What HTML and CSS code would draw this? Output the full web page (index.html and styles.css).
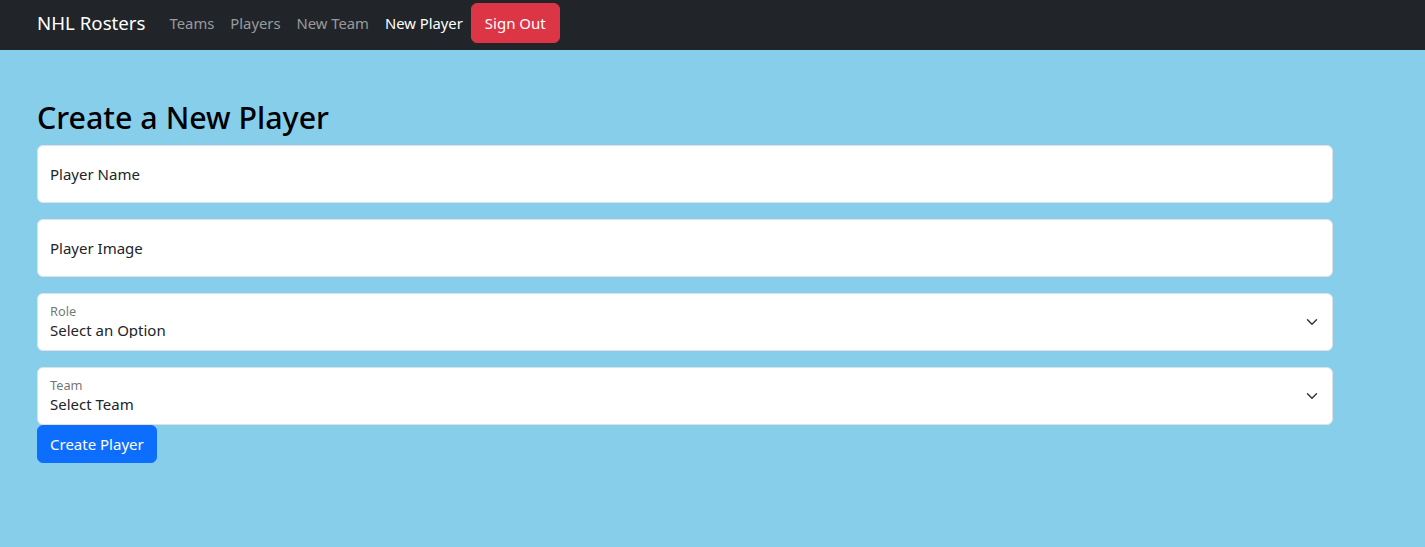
FILE: index.html
```html
<!DOCTYPE html>
<html lang="en">
<head>
<meta charset="utf-8">
<title>NHL Rosters</title>
<link rel="stylesheet" href="styles.css">
</head>
<body>
<nav class="navbar">
  <div class="nav-inner">
    <a class="brand" href="#">NHL Rosters</a>
    <ul class="nav-list">
      <li><a class="nav-link" href="#">Teams</a></li>
      <li><a class="nav-link" href="#">Players</a></li>
      <li><a class="nav-link" href="#">New Team</a></li>
      <li><a class="nav-link active" href="#">New Player</a></li>
      <li><button class="btn btn-danger" type="button">Sign Out</button></li>
    </ul>
  </div>
</nav>
<main class="container">
  <h2 class="title">Create a New Player</h2>
  <form class="player-form">
    <div class="floating">
      <input class="control" type="text" id="pname" placeholder=" ">
      <label class="float-label" for="pname">Player Name</label>
    </div>
    <div class="floating">
      <input class="control" type="text" id="pimage" placeholder=" ">
      <label class="float-label" for="pimage">Player Image</label>
    </div>
    <div class="floating">
      <select class="control select" id="role">
        <option>Select an Option</option>
      </select>
      <label class="float-label floated" for="role">Role</label>
    </div>
    <div class="floating last">
      <select class="control select" id="team">
        <option>Select Team</option>
      </select>
      <label class="float-label floated" for="team">Team</label>
    </div>
    <button class="btn btn-primary" type="button">Create Player</button>
  </form>
</main>
</body>
</html>
```
FILE: styles.css
```css
* { box-sizing: border-box; }
html, body { margin: 0; padding: 0; }
body {
  font-family: "Noto Sans", "Open Sans", sans-serif;
  font-size: 15px;
  line-height: 24px;
  color: #212529;
  background: #87ceeb;
  min-height: 547px;
}
.navbar {
  background: #212529;
  height: 50px;
  padding: 3px 0 7px;
}
.nav-inner {
  display: flex;
  align-items: center;
  padding-left: 37px;
  height: 40px;
}
.brand {
  color: #fff;
  text-decoration: none;
  font-size: 18.7px;
  line-height: 30px;
  margin-right: 16px;
}
.nav-list {
  list-style: none;
  margin: 0;
  padding: 0;
  display: flex;
  align-items: center;
}
.nav-link {
  display: block;
  padding: 8px;
  font-size: 14.8px;
  color: rgba(255,255,255,.55);
  text-decoration: none;
  line-height: 24px;
}
.nav-link.active { color: #fff; }
.btn {
  font-family: inherit;
  font-size: 15px;
  line-height: 24px;
  border: 1px solid transparent;
  border-radius: 6px;
  color: #fff;
  cursor: pointer;
}
.btn-danger {
  background: #dc3545;
  border-color: #dc3545;
  padding: 7px 13px;
}
.btn-primary {
  background: #0d6efd;
  border-color: #0d6efd;
  padding: 6px 12px;
}
.container {
  width: 1345px;
  padding: 49px 12px 0 37px;
}
.title {
  font-size: 30.4px;
  font-weight: 500;
  line-height: 38px;
  color: #000;
  margin: 0 0 8px;
}
.player-form {
  width: 1296px;
  display: flex;
  flex-direction: column;
  align-items: flex-start;
}
.floating {
  position: relative;
  width: 100%;
  margin-bottom: 16px;
}
.floating.last { margin-bottom: 0; }
.control {
  display: block;
  width: 100%;
  height: 58px;
  font-family: inherit;
  font-size: 15px;
  line-height: 24px;
  color: #212529;
  background: #fff;
  border: 1px solid #dee2e6;
  border-radius: 6px;
  padding: 16px 12px;
  outline: none;
  -webkit-appearance: none;
  appearance: none;
}
.select {
  padding: 24px 36px 12px 12px;
  background-image: url("data:image/svg+xml,%3csvg xmlns='http://www.w3.org/2000/svg' viewBox='0 0 16 16'%3e%3cpath fill='none' stroke='%23343a40' stroke-linecap='round' stroke-linejoin='round' stroke-width='2' d='m2 5 6 6 6-6'/%3e%3c/svg%3e");
  background-repeat: no-repeat;
  background-position: right 12px center;
  background-size: 16px 12px;
}
.float-label {
  position: absolute;
  top: 0;
  left: 0;
  padding: 17px 13px 15px;
  line-height: 24px;
  pointer-events: none;
  color: #212529;
}
.float-label.floated {
  font-size: 12.8px;
  line-height: 20px;
  padding: 8px 13px;
  color: rgba(33,37,41,.65);
}
```
